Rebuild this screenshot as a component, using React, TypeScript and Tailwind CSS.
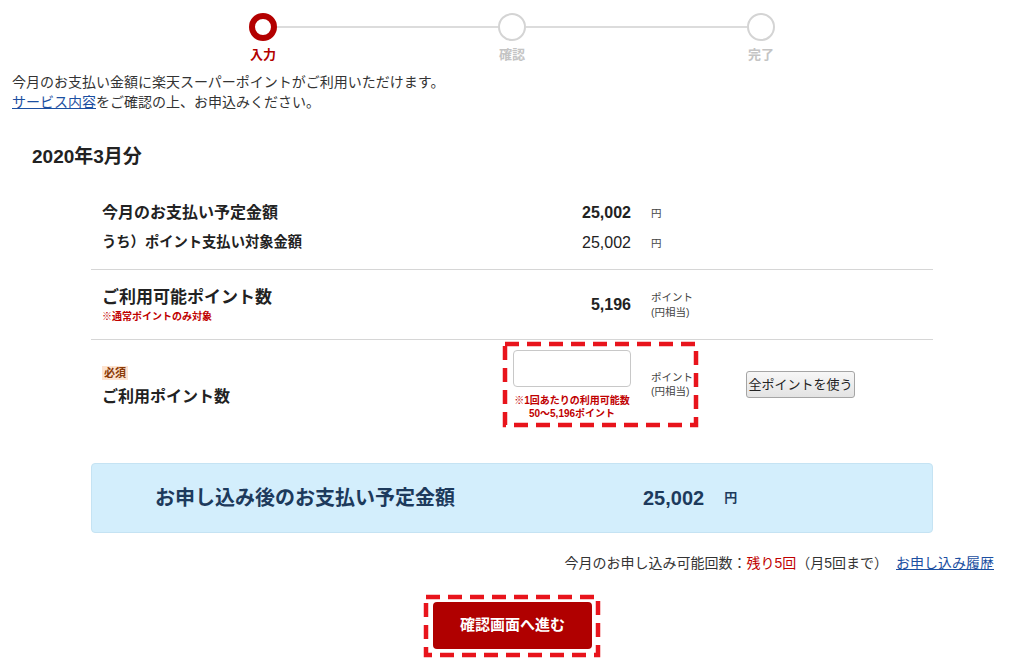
import React, { FC, ReactNode } from "react";

const DashedFrame: FC<{ children: ReactNode; className?: string }> = ({ children, className }) => (
  <div className={`relative ${className ?? ""}`}>
    {children}
    <svg className="pointer-events-none absolute inset-[2px] h-[calc(100%-4px)] w-[calc(100%-4px)] overflow-visible">
      <rect x="0" y="0" width="100%" height="100%" fill="none" stroke="#e8141c" strokeWidth="4.5" strokeDasharray="14 8" />
    </svg>
  </div>
);

const StepCircle: FC<{ active?: boolean }> = ({ active }) =>
  active ? (
    <div className="h-[28px] w-[28px] shrink-0 rounded-full border-[6px] border-[#b30000] bg-white" />
  ) : (
    <div className="h-[28px] w-[28px] shrink-0 rounded-full border-2 border-[#d4d4d4] bg-white" />
  );

const Unit: FC<{ children: ReactNode }> = ({ children }) => (
  <div className="ml-[20px] text-[10.5px] leading-[15px] text-[#444]">{children}</div>
);

const App: FC = () => {
  return (
    <div className="min-h-[660px] bg-white font-['Liberation_Sans','Noto_Sans_CJK_JP',sans-serif] text-[#333]">
      {/* stepper */}
      <div className="mx-auto w-[526px] pt-[13px]">
        <div className="flex items-center">
          <StepCircle active />
          <div className="h-[2px] flex-1 bg-[#dcdcdc]" />
          <StepCircle />
          <div className="h-[2px] flex-1 bg-[#dcdcdc]" />
          <StepCircle />
        </div>
        <div className="mt-[6px] flex justify-between text-[13px] font-bold leading-4">
          <span className="flex w-[28px] justify-center whitespace-nowrap text-[#b30000]">入力</span>
          <span className="flex w-[28px] justify-center whitespace-nowrap text-[#c4c4c4]">確認</span>
          <span className="flex w-[28px] justify-center whitespace-nowrap text-[#c4c4c4]">完了</span>
        </div>
      </div>

      {/* intro */}
      <div className="mt-[9px] px-[12px] text-[14px] leading-[20px] text-[#333]">
        <p>今月のお支払い金額に楽天スーパーポイントがご利用いただけます。</p>
        <p>
          <a href="#" className="text-[#1c4fa1] underline">
            サービス内容
          </a>
          をご確認の上、お申込みください。
        </p>
      </div>

      <h2 className="mt-[32px] pl-[32px] text-[19px] font-bold leading-[26px] text-[#222]">2020年3月分</h2>

      {/* table */}
      <div className="mx-[91px] mt-[28px]">
        <div className="border-b border-[#d6d6d6] pb-[11px]">
          <div className="flex h-[30px] items-center pl-[11px]">
            <div className="w-[400px] text-[16px] font-bold text-[#222]">今月のお支払い予定金額</div>
            <div className="w-[129px] text-right text-[16px] font-bold text-[#222]">25,002</div>
            <Unit>円</Unit>
          </div>
          <div className="flex h-[30px] items-center pl-[11px]">
            <div className="w-[400px] text-[14.3px] font-bold text-[#222]">うち）ポイント支払い対象金額</div>
            <div className="w-[129px] text-right text-[16px] text-[#222]">25,002</div>
            <Unit>円</Unit>
          </div>
        </div>

        <div className="flex h-[70px] items-center border-b border-[#d6d6d6] pl-[11px]">
          <div className="w-[400px]">
            <div className="text-[17px] font-bold leading-[24px] text-[#222]">ご利用可能ポイント数</div>
            <div className="text-[10px] font-bold leading-[14px] text-[#bf0000]">※通常ポイントのみ対象</div>
          </div>
          <div className="w-[129px] text-right text-[16px] font-bold text-[#222]">5,196</div>
          <Unit>
            <div>ポイント</div>
            <div>(円相当)</div>
          </Unit>
        </div>

        <div className="flex items-center pb-[12px] pt-[2px] pl-[11px]">
          <div className="w-[401px]">
            <span className="inline-block bg-[#fde3d0] px-[2px] text-[11px] font-bold leading-[14px] text-[#8a3a06]">必須</span>
            <div className="mt-[1px] text-[16px] font-bold leading-[24px] text-[#222]">ご利用ポイント数</div>
          </div>
          <DashedFrame className="flex h-[85px] w-[195px] items-center pl-[10px]">
            <div className="flex w-[118px] flex-col items-center">
              <input type="text" className="h-[37px] w-[118px] rounded-[4px] border border-[#c8c8c8] bg-white" />
              <div className="mt-[7px] whitespace-nowrap text-center text-[10px] font-bold leading-[13px] text-[#bf0000]">
                <div>※1回あたりの利用可能数</div>
                <div>50〜5,196ポイント</div>
              </div>
            </div>
            <div className="ml-[20px] pb-[2px] text-[10.5px] leading-[14px] text-[#444]">
              <div>ポイント</div>
              <div>(円相当)</div>
            </div>
          </DashedFrame>
          <button className="ml-[48px] h-[27px] w-[109px] rounded-[3px] border border-[#a5a5a5] bg-gradient-to-b from-[#f7f7f7] to-[#e3e3e3] text-[13px] text-[#222]">
            全ポイントを使う
          </button>
        </div>

        {/* total */}
        <div className="mt-[24px] flex h-[70px] items-center rounded-[4px] border border-[#c5e3f3] bg-[#d3eefc] pl-[63px]">
          <div className="w-[488px] text-[20px] font-bold text-[#1d3a5c]">お申し込み後のお支払い予定金額</div>
          <div className="text-[20px] font-bold text-[#1d3a5c]">25,002</div>
          <div className="ml-[20px] text-[13px] font-bold text-[#1d3a5c]">円</div>
        </div>
      </div>

      {/* remaining count */}
      <div className="mt-[20px] pr-[30px] text-right text-[14px] leading-[20px] text-[#333]">
        今月のお申し込み可能回数：<span className="text-[#bf0000]">残り5回</span>（月5回まで）
        <a href="#" className="ml-[8px] text-[#1c4fa1] underline">
          お申し込み履歴
        </a>
      </div>

      {/* submit */}
      <div className="mt-[22px] flex justify-center">
        <DashedFrame className="pb-[8px] pl-[9px] pr-[8px] pt-[7px]">
          <button className="h-[47px] w-[159px] rounded-[4px] bg-[#b00000] text-[15px] font-bold text-white">
            確認画面へ進む
          </button>
        </DashedFrame>
      </div>
    </div>
  );
};

export default App;
